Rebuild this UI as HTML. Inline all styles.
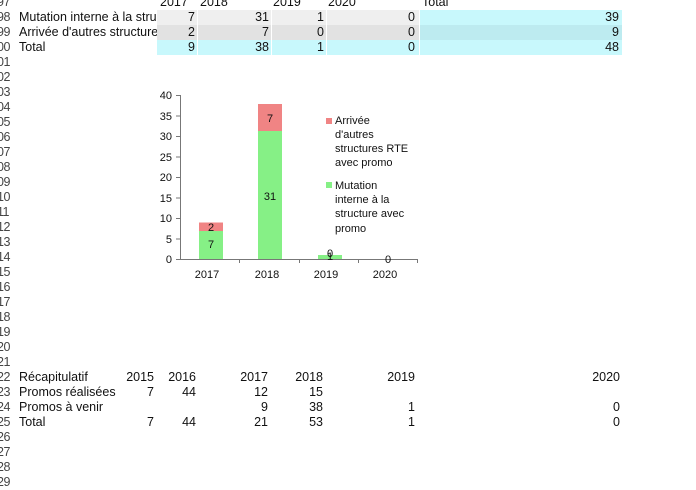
<!DOCTYPE html>
<html><head><meta charset="utf-8"><style>
body{margin:0;width:696px;height:486px;overflow:hidden;background:#fff;font-family:"Liberation Sans",Arial,sans-serif;font-size:12.5px;color:#111;position:relative}
.r{position:absolute;left:0;width:696px;height:15px;line-height:15px}
.n{position:absolute;left:-3px;width:24px;color:#444;text-align:left;letter-spacing:-0.5px}
.c{position:absolute;top:0;height:15px;white-space:nowrap;overflow:hidden}
.rt{text-align:right}
svg text{font-family:"Liberation Sans",Arial,sans-serif;font-size:11px;fill:#111}
</style></head><body>
<div class="r" style="top:-5px"><span class="n">97</span>
<span class="c" style="left:160px">2017</span><span class="c" style="left:200px">2018</span><span class="c" style="left:273px">2019</span><span class="c" style="left:328px">2020</span><span class="c" style="left:422px">Total</span></div>
<div class="r" style="top:10px"><span class="n">98</span>
<span class="c" style="left:19px;width:138px">Mutation interne à la structure</span>
<span class="c rt" style="left:157px;width:38px;background:#efefef;padding-right:2px">7</span>
<span class="c rt" style="left:198px;width:71px;background:#efefef;padding-right:2px">31</span>
<span class="c rt" style="left:272px;width:52px;background:#efefef;padding-right:2px">1</span>
<span class="c rt" style="left:327px;width:88px;background:#efefef;padding-right:4px">0</span>
<span class="c rt" style="left:420px;width:199px;background:#c8f8fc;padding-right:3px">39</span></div>
<div class="r" style="top:25px"><span class="n">99</span>
<span class="c" style="left:19px;width:138px">Arrivée d'autres structures</span>
<span class="c rt" style="left:157px;width:38px;background:#e2e2e2;padding-right:2px">2</span>
<span class="c rt" style="left:198px;width:71px;background:#e2e2e2;padding-right:2px">7</span>
<span class="c rt" style="left:272px;width:52px;background:#e2e2e2;padding-right:2px">0</span>
<span class="c rt" style="left:327px;width:88px;background:#e2e2e2;padding-right:4px">0</span>
<span class="c rt" style="left:420px;width:199px;background:#bdebf0;padding-right:3px">9</span></div>
<div class="r" style="top:40px"><span class="n">00</span>
<span class="c" style="left:19px">Total</span>
<span class="c rt" style="left:157px;width:38px;background:#c8f8fc;padding-right:2px">9</span>
<span class="c rt" style="left:198px;width:71px;background:#c8f8fc;padding-right:2px">38</span>
<span class="c rt" style="left:272px;width:52px;background:#c8f8fc;padding-right:2px">1</span>
<span class="c rt" style="left:327px;width:88px;background:#c8f8fc;padding-right:4px">0</span>
<span class="c rt" style="left:420px;width:199px;background:#c8f8fc;padding-right:3px">48</span></div>
<div class="r" style="top:55px"><span class="n">01</span></div>
<div class="r" style="top:70px"><span class="n">02</span></div>
<div class="r" style="top:85px"><span class="n">03</span></div>
<div class="r" style="top:100px"><span class="n">04</span></div>
<div class="r" style="top:115px"><span class="n">05</span></div>
<div class="r" style="top:130px"><span class="n">06</span></div>
<div class="r" style="top:145px"><span class="n">07</span></div>
<div class="r" style="top:160px"><span class="n">08</span></div>
<div class="r" style="top:175px"><span class="n">09</span></div>
<div class="r" style="top:190px"><span class="n">10</span></div>
<div class="r" style="top:205px"><span class="n">11</span></div>
<div class="r" style="top:220px"><span class="n">12</span></div>
<div class="r" style="top:235px"><span class="n">13</span></div>
<div class="r" style="top:250px"><span class="n">14</span></div>
<div class="r" style="top:265px"><span class="n">15</span></div>
<div class="r" style="top:280px"><span class="n">16</span></div>
<div class="r" style="top:295px"><span class="n">17</span></div>
<div class="r" style="top:310px"><span class="n">18</span></div>
<div class="r" style="top:325px"><span class="n">19</span></div>
<div class="r" style="top:340px"><span class="n">20</span></div>
<div class="r" style="top:355px"><span class="n">21</span></div>
<div class="r" style="top:370px"><span class="n">22</span>
<span class="c" style="left:19px">Récapitulatif</span>
<span class="c rt" style="left:120px;width:34px">2015</span><span class="c rt" style="left:160px;width:36px">2016</span>
<span class="c rt" style="left:220px;width:48px">2017</span><span class="c rt" style="left:280px;width:43px">2018</span>
<span class="c rt" style="left:360px;width:55px">2019</span><span class="c rt" style="left:560px;width:60px">2020</span></div>
<div class="r" style="top:385px"><span class="n">23</span>
<span class="c" style="left:19px">Promos réalisées</span>
<span class="c rt" style="left:120px;width:34px">7</span><span class="c rt" style="left:160px;width:36px">44</span>
<span class="c rt" style="left:220px;width:48px">12</span><span class="c rt" style="left:280px;width:43px">15</span></div>
<div class="r" style="top:400px"><span class="n">24</span>
<span class="c" style="left:19px">Promos à venir</span>
<span class="c rt" style="left:220px;width:48px">9</span><span class="c rt" style="left:280px;width:43px">38</span>
<span class="c rt" style="left:360px;width:55px">1</span><span class="c rt" style="left:560px;width:60px">0</span></div>
<div class="r" style="top:415px"><span class="n">25</span>
<span class="c" style="left:19px">Total</span>
<span class="c rt" style="left:120px;width:34px">7</span><span class="c rt" style="left:160px;width:36px">44</span>
<span class="c rt" style="left:220px;width:48px">21</span><span class="c rt" style="left:280px;width:43px">53</span>
<span class="c rt" style="left:360px;width:55px">1</span><span class="c rt" style="left:560px;width:60px">0</span></div>
<div class="r" style="top:430px"><span class="n">26</span></div>
<div class="r" style="top:445px"><span class="n">27</span></div>
<div class="r" style="top:460px"><span class="n">28</span></div>
<div class="r" style="top:475px"><span class="n">29</span></div>

<svg style="position:absolute;left:0;top:0" width="696" height="486">
<g stroke="#777" stroke-width="1">
<line x1="180.5" y1="95" x2="180.5" y2="259"/>
<line x1="176" y1="95.5" x2="180" y2="95.5"/><line x1="176" y1="116" x2="180" y2="116"/><line x1="176" y1="136.5" x2="180" y2="136.5"/><line x1="176" y1="157" x2="180" y2="157"/><line x1="176" y1="177.5" x2="180" y2="177.5"/><line x1="176" y1="198" x2="180" y2="198"/><line x1="176" y1="218.5" x2="180" y2="218.5"/><line x1="176" y1="239" x2="180" y2="239"/>
<line x1="176" y1="259.5" x2="418" y2="259.5"/>
<line x1="239.5" y1="259" x2="239.5" y2="263"/><line x1="299.5" y1="259" x2="299.5" y2="263"/><line x1="358.5" y1="259" x2="358.5" y2="263"/><line x1="417.5" y1="259" x2="417.5" y2="263"/>
</g>
<g text-anchor="end">
<text x="172" y="99">40</text><text x="172" y="120">35</text><text x="172" y="140">30</text><text x="172" y="161">25</text><text x="172" y="181">20</text><text x="172" y="202">15</text><text x="172" y="222">10</text><text x="172" y="243">5</text><text x="172" y="263">0</text>
</g>
<rect x="199" y="231" width="24" height="28" fill="#86f086"/>
<rect x="199" y="222.5" width="24" height="8.5" fill="#f08484"/>
<rect x="258" y="131" width="24" height="128" fill="#86f086"/>
<rect x="258" y="104" width="24" height="27" fill="#f08484"/>
<rect x="318" y="255" width="24" height="4" fill="#86f086"/>
<g text-anchor="middle">
<text x="211" y="248">7</text><text x="211" y="231">2</text>
<text x="270" y="200">31</text><text x="270" y="122">7</text>
<text x="330" y="260">1</text><text x="330" y="257">0</text>
<text x="388" y="263">0</text>
<text x="207" y="278">2017</text><text x="267" y="278">2018</text><text x="326" y="278">2019</text><text x="385" y="278">2020</text>
</g>
<rect x="326" y="118" width="6" height="6" fill="#f08484"/>
<text x="335" y="124">Arrivée</text><text x="335" y="138">d'autres</text><text x="335" y="152">structures RTE</text><text x="335" y="166">avec promo</text>
<rect x="326" y="182" width="6" height="6" fill="#86f086"/>
<text x="335" y="189">Mutation</text><text x="335" y="203">interne à la</text><text x="335" y="217">structure avec</text><text x="335" y="232">promo</text>
</svg>
</body></html>
